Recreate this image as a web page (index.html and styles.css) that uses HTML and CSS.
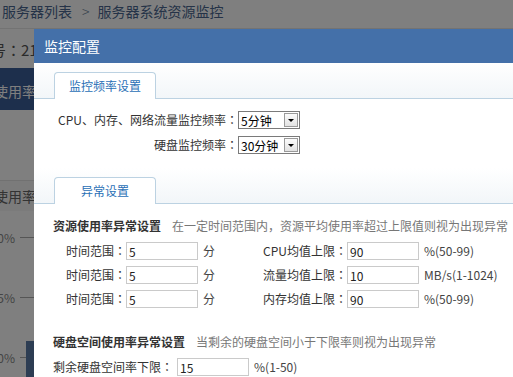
FILE: index.html
```html
<!DOCTYPE html>
<html lang="zh-CN">
<head>
<meta charset="utf-8">
<title>服务器系统资源监控</title>
<link rel="stylesheet" href="styles.css">
</head>
<body>
<div class="page">
  <div class="crumbs"><span>服务器列表</span><span class="sep">&gt;</span><span>服务器系统资源监控</span></div>
  <div class="info">号<span class="c">：</span>211</div>
  <div class="tabbar"><span>使用率</span></div>
  <div class="band"><span>使用率</span></div>
  <div class="chart">
    <div class="tick"><span class="lbl">100%</span><span class="line"></span></div>
    <div class="tick"><span class="lbl">75%</span><span class="line"></span></div>
    <div class="tick"><span class="lbl">50%</span><span class="line"></span><span class="bar"></span></div>
  </div>
</div>
<div class="overlay"></div>
<div class="dialog">
  <div class="dlg-head">监控配置</div>
  <div class="tabs"><div class="tab">监控频率设置</div></div>
  <div class="freq">
    <label class="flabel">CPU、内存、网络流量监控频率<span class="c">：</span></label>
    <span class="sel"><select><option>5分钟</option></select></span>
    <label class="flabel">硬盘监控频率<span class="c">：</span></label>
    <span class="sel"><select><option>30分钟</option></select></span>
  </div>
  <div class="tabs tabs2"><div class="tab">异常设置</div></div>
  <div class="section">
    <div class="stitle"><b>资源使用率异常设置</b><span class="desc">在一定时间范围内，资源平均使用率超过上限值则视为出现异常</span></div>
    <div class="grid">
      <label>时间范围<span class="c">：</span></label><input class="inp" value="5"><span class="unit">分</span>
      <label class="r">CPU均值上限<span class="c">：</span></label><input class="inp" value="90"><span class="unit">%(50-99)</span>
      <label>时间范围<span class="c">：</span></label><input class="inp" value="5"><span class="unit">分</span>
      <label class="r">流量均值上限<span class="c">：</span></label><input class="inp" value="10"><span class="unit">MB/s(1-1024)</span>
      <label>时间范围<span class="c">：</span></label><input class="inp" value="5"><span class="unit">分</span>
      <label class="r">内存均值上限<span class="c">：</span></label><input class="inp" value="90"><span class="unit">%(50-99)</span>
    </div>
    <div class="stitle s3"><b>硬盘空间使用率异常设置</b><span class="desc">当剩余的硬盘空间小于下限率则视为出现异常</span></div>
    <div class="row">
      <label>剩余硬盘空间率下限<span class="c">：</span></label><input class="inp" value="15"><span class="unit">%(1-50)</span>
    </div>
  </div>
</div>
</body>
</html>
```

FILE: styles.css
```css
html, body {
  margin: 0;
  padding: 0;
}
body {
  width: 513px;
  height: 377px;
  overflow: hidden;
  position: relative;
  background: #fff;
  font-family: "Noto Sans CJK SC", "Microsoft YaHei", sans-serif;
  font-size: 12px;
  color: #333;
}
label {
  white-space: nowrap;
}
.c {
  font-family: "Noto Sans CJK JP", "Noto Sans CJK SC", sans-serif;
  font-feature-settings: "locl" 0;
}

/* background page */
.page {
  width: 513px;
}
.crumbs {
  height: 28px;
  border-bottom: 1px solid #e6e6e6;
  padding-left: 2px;
  font-size: 14px;
  line-height: 22px;
  color: #4a6790;
  display: flex;
}
.crumbs .sep {
  margin: 0 8px 0 10px;
  font-weight: 300;
  color: #6b7f99;
}
.info {
  height: 39px;
  line-height: 42px;
  font-size: 15px;
  color: #555;
  margin-left: -9px;
  white-space: nowrap;
}
.tabbar {
  height: 42px;
  line-height: 46px;
  background: #3a5e98;
  color: #fff;
  font-size: 14px;
}
.tabbar span, .band span {
  margin-left: -6px;
}
.band {
  margin-top: 70px;
  height: 30px;
  line-height: 30px;
  font-size: 14px;
  color: #666;
  background: #f6f6f6;
  border-top: 1px solid #e2e2e2;
}
.chart {
  padding-top: 16px;
  display: grid;
  grid-auto-rows: 20px;
  row-gap: 40px;
}
.tick {
  display: flex;
  align-items: center;
  position: relative;
}
.tick .lbl {
  width: 15px;
  display: flex;
  justify-content: flex-end;
  white-space: nowrap;
  font-size: 12px;
  color: #888;
}
.tick .line {
  margin-left: 5px;
  width: 30px;
  height: 1px;
  background: #aaa;
}
.tick .bar {
  position: absolute;
  left: 26px;
  top: -6px;
  width: 20px;
  height: 60px;
  background: #5a7aa6;
}

.overlay {
  position: absolute;
  inset: 0;
  background: rgba(0, 0, 0, 0.5);
}

/* dialog */
.dialog {
  position: absolute;
  left: 34px;
  top: 29px;
  width: 500px;
  height: 370px;
  background: #fff;
}
.dlg-head {
  height: 34px;
  line-height: 34px;
  padding-left: 10px;
  background: #4470a9;
  color: #fff;
  font-size: 14px;
}
.tabs {
  height: 26px;
  padding-top: 9px;
  padding-left: 20px;
  border-bottom: 1px solid #bcd2e2;
  background: linear-gradient(#ffffff, #f2f6f9);
  display: flex;
  align-items: flex-end;
}
.tabs2 {
  margin-top: 14px;
}
.tab {
  box-sizing: border-box;
  width: 102px;
  height: 27px;
  margin-bottom: -1px;
  border: 1px solid #bcd2e2;
  border-bottom: none;
  border-radius: 4px 4px 0 0;
  background: #fff;
  color: #2a70b6;
  font-size: 12px;
  line-height: 25px;
  text-align: center;
}

.freq {
  padding-top: 12px;
  display: grid;
  grid-template-columns: 204px 62px;
  grid-auto-rows: 18px;
  row-gap: 7px;
  align-items: center;
}
.flabel {
  text-align: right;
  line-height: 18px;
}
.sel {
  position: relative;
  box-sizing: border-box;
  width: 62px;
  height: 18px;
  border: 1px solid #7a7a7a;
  background: #fff;
}
.sel select {
  appearance: none;
  -webkit-appearance: none;
  border: none;
  outline: none;
  background: transparent;
  width: 100%;
  height: 16px;
  margin: 0;
  padding: 0 0 0 2px;
  font-family: inherit;
  font-size: 12px;
  line-height: 16px;
  color: #000;
}
.sel::before {
  content: "";
  position: absolute;
  right: 1px;
  top: 1px;
  box-sizing: border-box;
  width: 14px;
  height: 14px;
  border: 1px solid #9a9a9a;
  background: linear-gradient(#fbfbfb, #e2e2e2);
  pointer-events: none;
}
.sel::after {
  content: "";
  position: absolute;
  right: 5px;
  top: 7px;
  width: 0;
  height: 0;
  border-left: 3px solid transparent;
  border-right: 3px solid transparent;
  border-top: 3px solid #000;
  pointer-events: none;
}

.section {
  padding-top: 13px;
}
.stitle {
  height: 18px;
  line-height: 18px;
  padding-left: 19px;
  display: flex;
  gap: 11px;
}
.stitle b {
  font-weight: bold;
  color: #333;
}
.desc {
  color: #777;
}
.s3 {
  margin-top: 25px;
}
.grid {
  margin-top: 7px;
  padding-left: 32px;
  display: grid;
  grid-template-columns: 60px 72px 34px 115px 72px auto;
  grid-auto-rows: 18px;
  row-gap: 6px;
  align-items: center;
  line-height: 18px;
}
.grid .r {
  text-align: right;
}
.inp {
  box-sizing: border-box;
  width: 72px;
  height: 18px;
  margin: 0;
  padding: 0 0 0 2px;
  border: 1px solid #cacaca;
  font-family: inherit;
  font-size: 12px;
  color: #222;
  outline: none;
}
.unit {
  padding-left: 5px;
  color: #444;
}
.row {
  margin-top: 7px;
  padding-left: 19px;
  display: flex;
  align-items: center;
  height: 18px;
  line-height: 18px;
}
.row .inp {
  margin-left: 4px;
}
```
